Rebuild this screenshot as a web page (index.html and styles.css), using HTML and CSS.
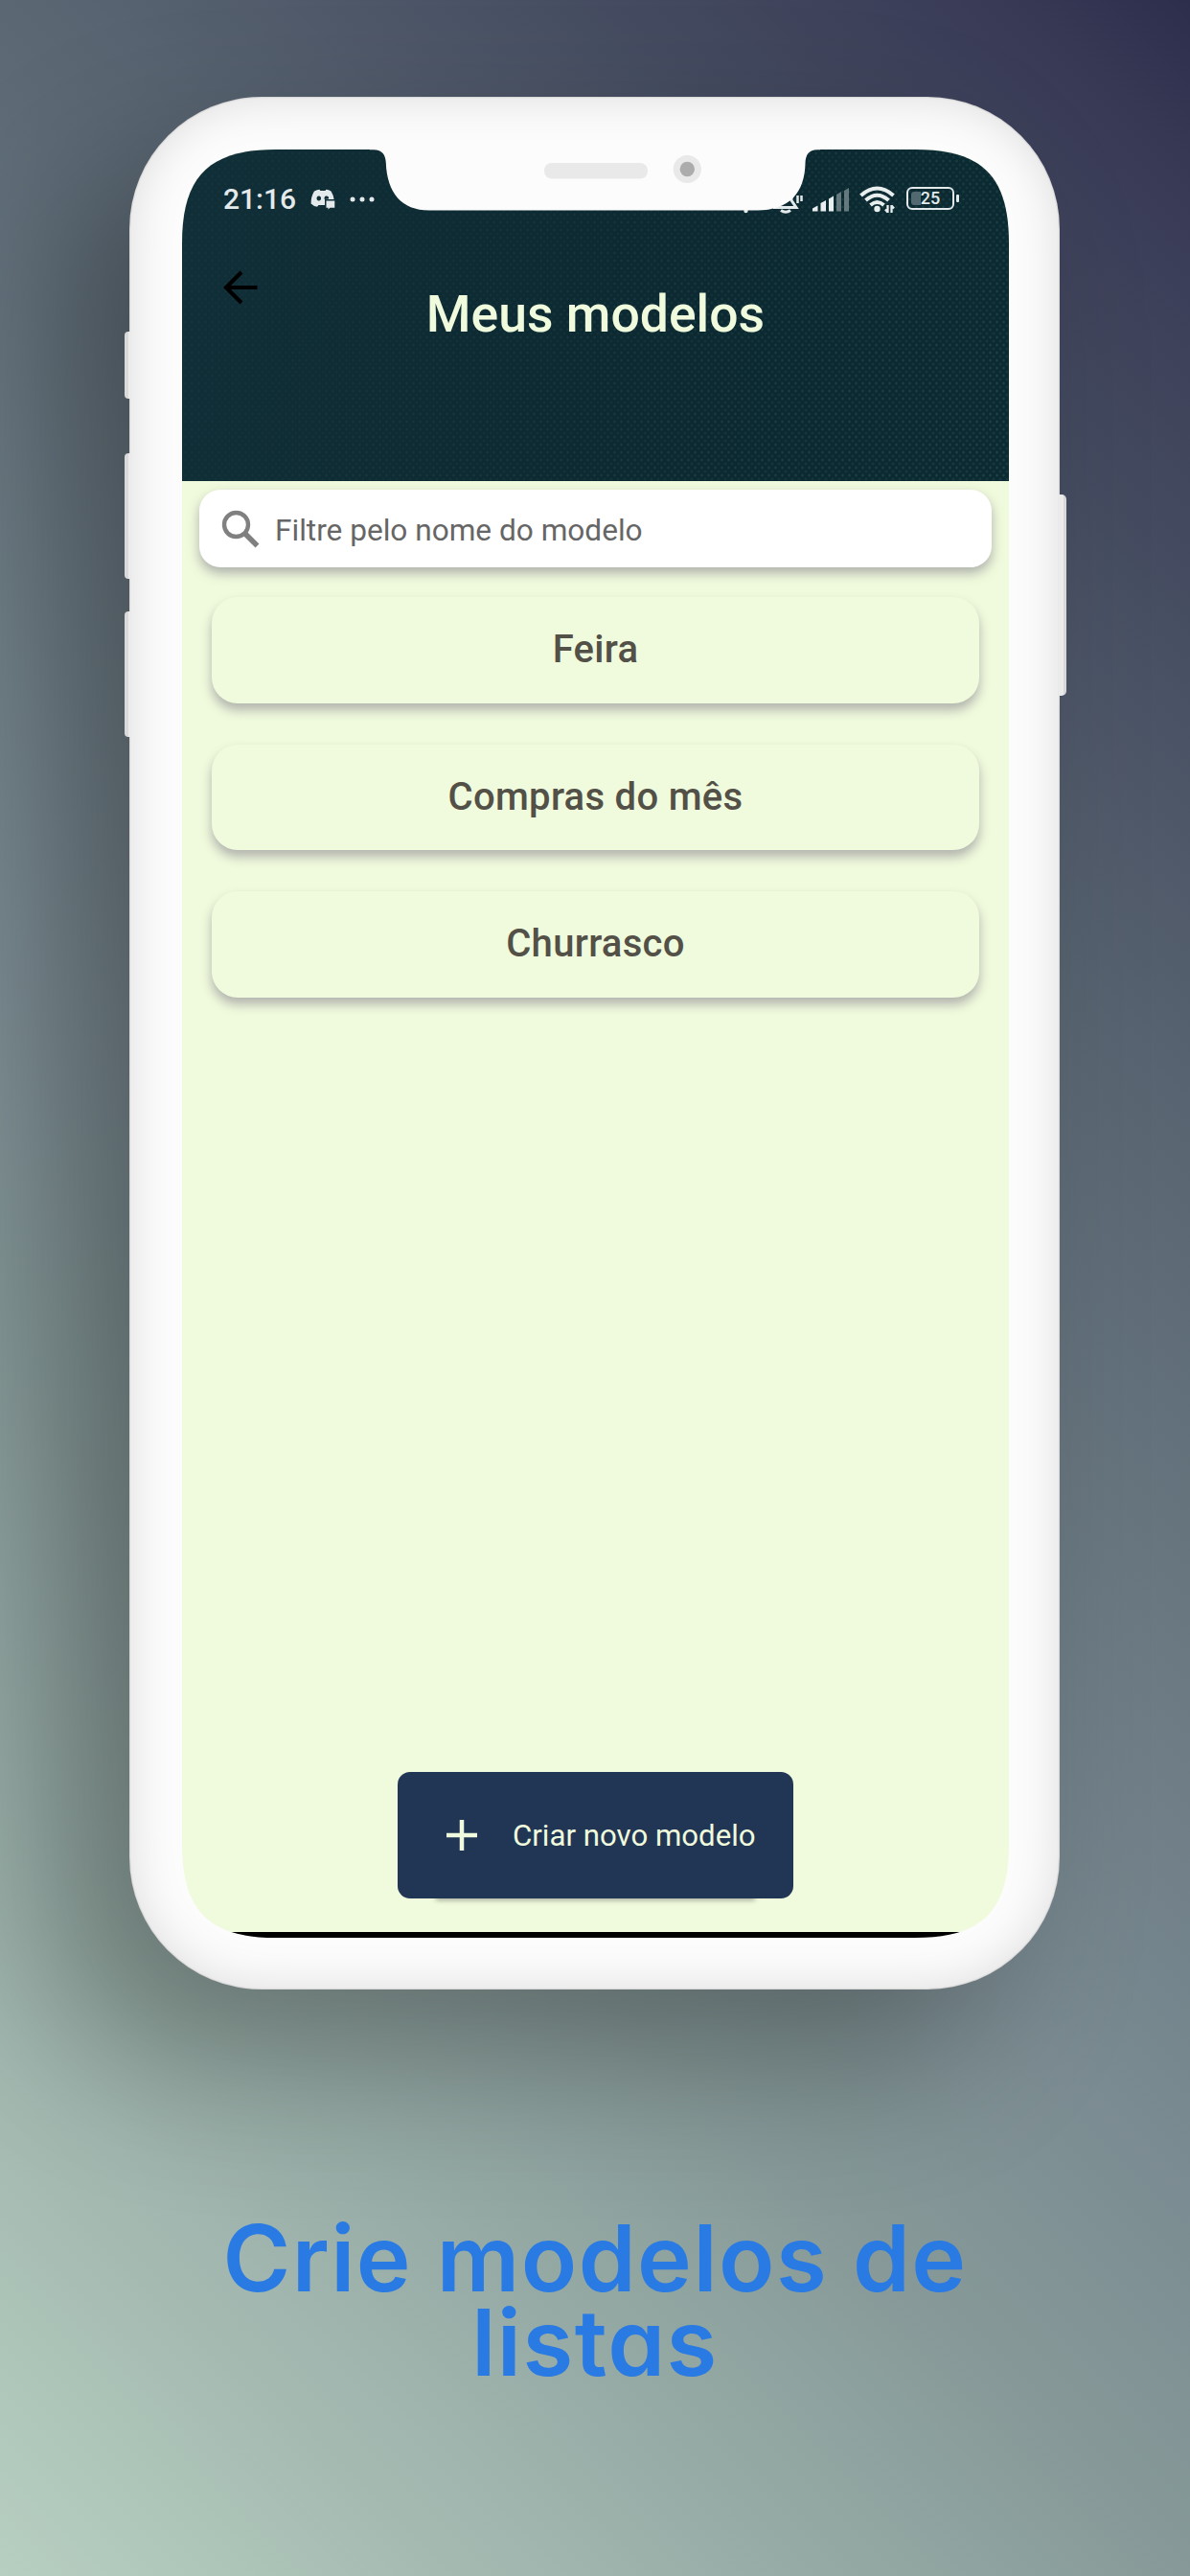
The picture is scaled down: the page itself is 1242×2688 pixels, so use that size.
FILE: index.html
```html
<!DOCTYPE html>
<html lang="pt-BR">
<head>
<meta charset="utf-8">
<title>Meus modelos</title>
<link rel="stylesheet" href="styles.css">
</head>
<body>
<main class="poster">
  <div class="phone">
    <span class="key key-mute"></span>
    <span class="key key-up"></span>
    <span class="key key-down"></span>
    <span class="key key-power"></span>
    <div class="body">
      <div class="screen">
        <header class="header">
          <div class="status">
            <span class="clock">21:16</span>
            <svg class="discord" width="26" height="22" viewBox="0 0 26 22"><path fill="#e4eaeb" fill-rule="evenodd" d="M4 2.500Q7 .8 9.500.8L10.300 2H15.500L16.300.8Q19 .8 21.500 2.500Q24 6.500 24.600 11H15V17H8.500L7 18.800Q3 18 .6 15.500Q.5 8 4 2.500ZM8.800 7.500a2.300 2.500 0 1 0 .01 0ZM16.600 7.500a2.300 2.300 0 0 0-1.800 3.500L19 10.500A2.300 2.300 0 0 0 16.600 7.500Z"/><path fill="#e4eaeb" d="M16.500 12.500H25.300V19.800H20.500L18.500 21.600V19.800H16.500Z"/></svg>
            <svg class="more" width="26" height="6" viewBox="0 0 26 6"><g fill="#e4eaeb"><circle cx="3" cy="3" r="2.500"/><circle cx="13" cy="3" r="2.500"/><circle cx="23" cy="3" r="2.500"/></g></svg>
            <svg class="muted" width="62" height="32" viewBox="0 0 62 32"><g fill="none" stroke="#e4eaeb" stroke-width="3"><path d="M31 24.500H55L50 17V8"/><path d="M39 27.500Q44 31 49 27.500"/><path d="M56.500 12v8M60.500 12v6" stroke-width="2.500"/></g><circle cx="2.500" cy="28" r="2.200" fill="#e4eaeb"/></svg>
            <svg class="signal" width="39" height="25" viewBox="0 0 39 25"><g fill="#e9eeee"><path d="M0 24.500V21.500L5.500 18.500V24.500ZM8.500 24.500V16L14 13V24.500ZM17 24.500V11.500L22 8.500V24.500Z"/><path opacity=".4" d="M25 24.500V7L30 4V24.500ZM33 24.500V3L38 0V24.500Z"/></g></svg>
            <svg class="wifi" width="38" height="29" viewBox="0 0 38 29"><g fill="none" stroke="#e9eeee" stroke-width="4"><path d="M1.500 10Q18.500-5 35.500 10"/><path d="M6.500 15Q18.500 4.500 30.500 15"/><path d="M11.500 20Q18.500 14 25.500 20"/></g><circle cx="18.500" cy="24" r="3.200" fill="#e9eeee"/><path d="M29.500 20V28M33.500 20V28M27 24.500L29.500 27.500M36 23.500L33.500 20.500" fill="none" stroke="#e9eeee" stroke-width="2.300"/></svg>
            <span class="battery"><span class="charge"></span><span class="percent">25</span></span>
          </div>
          <svg class="back" width="36" height="36" viewBox="0 0 36 36"><path d="M35.500 18H3M19 2L3 18L19 34" fill="none" stroke="#000" stroke-width="4.200"/></svg>
          <h1 class="title">Meus modelos</h1>
        </header>
        <label class="search">
          <svg class="lens" width="40" height="40" viewBox="0 0 40 40"><circle cx="15.500" cy="15.500" r="12.500" fill="none" stroke="#808080" stroke-width="4.400"/><path d="M24 24L37.500 37.500" stroke="#808080" stroke-width="5.500"/></svg>
          <span class="hint">Filtre pelo nome do modelo</span>
        </label>
        <section class="models">
          <div class="card">Feira</div>
          <div class="card">Compras do mês</div>
          <div class="card">Churrasco</div>
        </section>
        <div class="create">
          <svg class="plus" width="32" height="32" viewBox="0 0 32 32"><path d="M0 16H32M16 0V32" stroke="#f0fadc" stroke-width="4.500"/></svg>
          <span class="create-label">Criar novo modelo</span>
        </div>
        <div class="navbar"></div>
        <svg class="notch" width="470" height="65" viewBox="0 0 470 65"><path fill="#fcfcfc" d="M0-1V.3H4C13 .3 16.500 6 16.800 14C18 45 33 63.500 62 63.500H404C438 63.500 454 45 454.500 14C454.800 6 458 .3 467 .3H470V-1Z"/><rect x="182" y="14" width="108" height="16.500" rx="8" fill="#e9e9e9"/><circle cx="331.300" cy="20.500" r="14.600" fill="#e9e9e9"/><circle cx="331.300" cy="20.500" r="7.700" fill="#acacac"/></svg>
      </div>
    </div>
  </div>
  <p class="caption">Crie modelos de listas</p>
</main>
</body>
</html>
```
FILE: styles.css
```css
* { box-sizing: border-box; }

body {
  margin: 0;
  font-family: Roboto, "Liberation Sans", sans-serif;
}

.poster {
  display: flex;
  flex-direction: column;
  align-items: center;
  width: 1242px;
  height: 2688px;
  padding-top: 101px;
  overflow: hidden;
  background: linear-gradient(45deg, #b7cfc1 0%, #869998 32%, #7a8a91 43%, #5a6773 69%, #4e5768 78%, #444b60 85%, #3a3c57 94%, #2d2e4c 100%);
}

.phone {
  position: relative;
  width: 971px;
  height: 1975px;
  margin-left: -1px;
}

.body {
  position: relative;
  height: 100%;
  padding: 55px 53px 54px 55px;
  border-radius: 138px;
  background: #fcfcfc;
  box-shadow: inset 0 0 50px rgba(0, 0, 0, .13), inset 0 0 2px rgba(0, 0, 0, .3), -72px 72px 160px rgba(0, 0, 0, .31);
}

/* Hardware keys on the sides of the case */
.key {
  position: absolute;
  z-index: 1;
  left: -5px;
  width: 8px;
  border-radius: 4px 0 0 4px;
  background: linear-gradient(90deg, #dadada 50%, #ececec 50%);
}
.key-mute { top: 245px; height: 70px; }
.key-up { top: 372px; height: 131px; }
.key-down { top: 537px; height: 131px; }
.key-power {
  top: 415px;
  left: 970px;
  height: 210px;
  border-radius: 0 5px 5px 0;
  background: linear-gradient(90deg, #ebebeb 60%, #d8d8d8 60%);
}

.screen {
  position: relative;
  display: flex;
  flex-direction: column;
  align-items: center;
  height: 1866px;
  background: #f0fadc;
  clip-path: path("M0 98C0 28 28 0 98 0H765C835 0 863 28 863 98V1768C863 1838 835 1866 765 1866H98C28 1866 0 1838 0 1768Z");
}

.header {
  position: relative;
  display: flex;
  flex-direction: column;
  flex: none;
  width: 100%;
  height: 346px;
  padding: 36px 51px 0 43px;
  background: linear-gradient(100deg, #112f38, #0d2931 50%, #0b2a32);
}

/* Woven texture, stronger towards the lower right */
.header::before {
  content: "";
  position: absolute;
  inset: 0;
  background:
    radial-gradient(circle, rgba(80, 130, 130, .3) 0 .5px, transparent 2px) 0 0 / 7px 8px,
    radial-gradient(circle, rgba(80, 130, 130, .22) 0 .5px, transparent 2px) 3.5px 4px / 7px 8px;
  mask-image: linear-gradient(125deg, rgba(0, 0, 0, .2) 20%, #000);
}

.status {
  position: relative;
  display: flex;
  align-items: center;
  height: 32px;
  color: #e4eaeb;
}
.clock { font-size: 30px; font-weight: 500; line-height: 32px; }
.discord { margin-left: 15px; }
.more { margin-left: 15px; }
.muted { margin-left: auto; }
.signal { margin-left: 10px; }
.wifi { margin-left: 10px; }
.battery {
  position: relative;
  display: flex;
  align-items: center;
  justify-content: center;
  width: 50px;
  height: 24px;
  margin: -2px 6px 0 11px;
  border: 2px solid #e4eaeb;
  border-radius: 6px;
}
.battery::after {
  content: "";
  position: absolute;
  right: -7px;
  top: 6px;
  width: 3px;
  height: 8px;
  border-radius: 1px;
  background: #e4eaeb;
}
.charge {
  position: absolute;
  left: 3px;
  top: 3px;
  width: 10px;
  height: 14px;
  border-radius: 3px 0 0 3px;
  background: #526970;
}
.percent { position: relative; font-size: 18px; font-weight: 500; line-height: 20px; }

.back { position: relative; margin: 58px 0 0; }
.title {
  position: relative;
  margin: -22px 0 0 8px;
  text-align: center;
  font-size: 53.500px;
  font-weight: 500;
  line-height: 64px;
  color: #f0fadc;
}

.search {
  display: flex;
  flex: none;
  align-items: center;
  width: 827px;
  height: 81px;
  margin-top: 9px;
  padding-left: 23px;
  border-radius: 22px;
  background: #fff;
  box-shadow: 0 6px 12px rgba(110, 105, 125, .5);
}
.hint { margin: 4px 0 0 16px; font-size: 31.600px; color: #666; }

.models {
  display: flex;
  flex-direction: column;
  gap: 43px;
  width: 801px;
  margin-top: 31px;
}
.card {
  height: 110.500px;
  border-radius: 27px;
  text-align: center;
  font-size: 40px;
  font-weight: 500;
  letter-spacing: .3px;
  line-height: 110px;
  color: #525047;
  background: #f0fadc;
  box-shadow: 0 7px 11px rgba(110, 105, 125, .48);
}

.create {
  display: flex;
  align-items: center;
  width: 413px;
  height: 132px;
  margin-top: auto;
  padding-left: 51px;
  border-radius: 13px;
  background: #213655;
  box-shadow: 0 42px 5px -40px rgba(60, 60, 60, .4);
}
.create-label { margin-left: 37px; font-size: 31.200px; color: #f0fadc; }

.navbar {
  width: 100%;
  height: 6px;
  margin-top: 35px;
  background: #000;
}

.notch {
  position: absolute;
  left: 196px;
  top: 0;
}

.caption {
  width: 850px;
  margin: 236px 0 0;
  text-align: center;
  font-family: Inter, sans-serif;
  font-feature-settings: "cv11";
  font-size: 96px;
  font-weight: 600;
  letter-spacing: 1.500px;
  line-height: 88px;
  color: #2a7ae4;
}
```
